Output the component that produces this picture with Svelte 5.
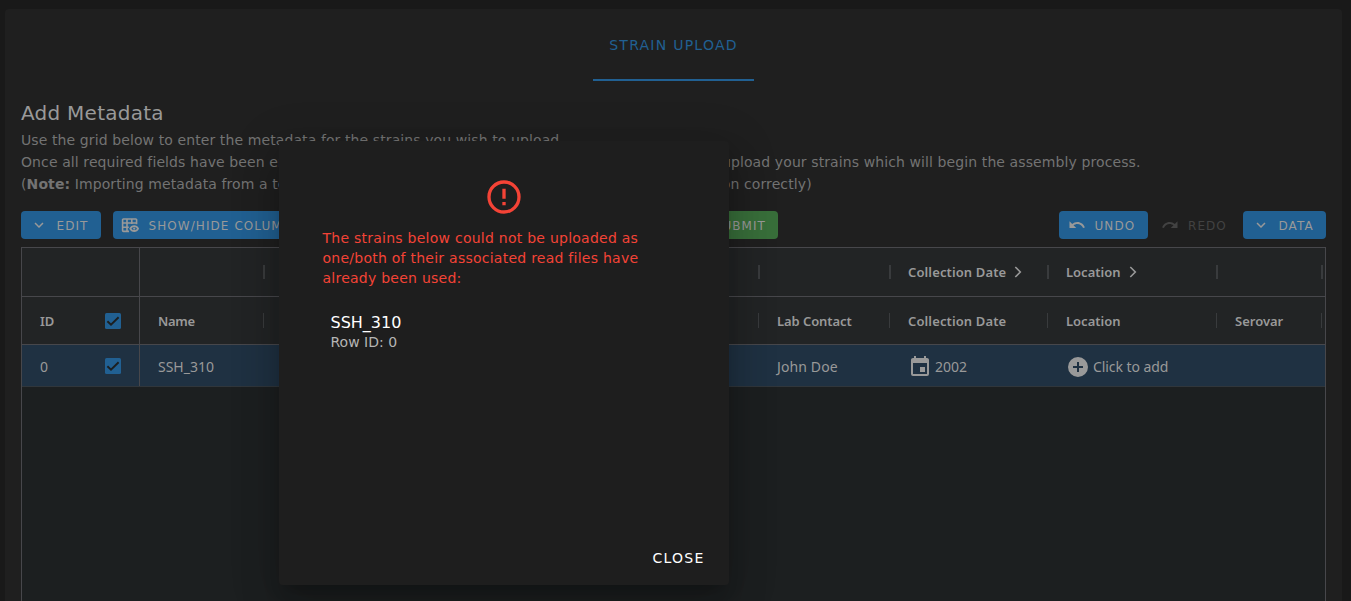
<script>
  const chevron = 'M7.41,8.58L12,13.17L16.59,8.58L18,10L12,16L6,10L7.41,8.58Z';
  const undo = 'M12.5,8C9.85,8 7.45,9 5.6,10.6L2,7V16H11L7.38,12.38C8.77,11.22 10.54,10.5 12.5,10.5C16.04,10.5 19.05,12.81 20.1,16L22.47,15.22C21.08,11.03 17.15,8 12.5,8Z';
  const redo = 'M18.4,10.6C16.55,9 14.15,8 11.5,8C6.85,8 2.92,11.03 1.54,15.22L3.9,16C4.95,12.81 7.95,10.5 11.5,10.5C13.45,10.5 15.23,11.22 16.62,12.38L13,16H22V7L18.4,10.6Z';
  const alert = 'M11,15H13V17H11V15M11,7H13V13H11V7M12,2C6.47,2 2,6.5 2,12A10,10 0 0,0 12,22A10,10 0 0,0 22,12A10,10 0 0,0 12,2M12,20A8,8 0 0,1 4,12A8,8 0 0,1 12,4A8,8 0 0,1 20,12A8,8 0 0,1 12,20Z';
  const plus = 'M17,13H13V17H11V13H7V11H11V7H13V11H17M12,2A10,10 0 0,0 2,12A10,10 0 0,0 12,22A10,10 0 0,0 22,12A10,10 0 0,0 12,2Z';
  const calendar = 'M19,19H5V8H19M16,1V3H8V1H6V3H5C3.89,3 3,3.89 3,5V19A2,2 0 0,0 5,21H19A2,2 0 0,0 21,19V5C21,3.89 20.1,3 19,3H18V1M17,12H12V17H17V12Z';
  const groups = ['', '', '', 'Collection Date', 'Location', ''];
  const columns = ['Name', '', 'Lab Contact', 'Collection Date', 'Location', 'Serovar'];
</script>

{#snippet icon(d, size)}
  <svg class="icon" width={size} height={size} viewBox="0 0 24 24"><path fill="currentColor" {d} /></svg>
{/snippet}

{#snippet checkbox()}
  <svg class="check" width="16" height="16" viewBox="0 0 16 16">
    <rect width="16" height="16" rx="1.5" fill="#216092" />
    <path d="M2.4 8.2 6 11.6 13.6 4.2" fill="none" stroke="#1c1f20" stroke-width="1.9" />
  </svg>
{/snippet}

<main class="page">
  <section class="card">
    <nav class="tabs"><div class="tab">STRAIN UPLOAD</div></nav>
    <h1>Add Metadata</h1>
    <div class="intro">
      <p>Use the grid below to enter the metadata for the strains you wish to upload.</p>
      <p><span class="lead first">Once all required fields have been entered</span><span>upload your strains which will begin the assembly process.</span></p>
      <p><span class="lead second">(<b>Note:</b> Importing metadata from a template</span><span>function correctly)</span></p>
    </div>

    <div class="toolbar">
      <button class="edit">{@render icon(chevron, 18)}<span>EDIT</span></button>
      <button class="show">
        <svg class="icon" width="18" height="18" viewBox="0 0 18 18" fill="none" stroke="currentColor" stroke-width="1.6">
          <path d="M8 15.4H2.4a.8.8 0 0 1-.8-.8V3.8a.8.8 0 0 1 .8-.8h12.4a.8.8 0 0 1 .8.8v4.4M1.6 7H15.6M1.6 11.2h6.2M6 3v12.4M10.8 3v5" />
          <path d="M9.3 12.6c1.6-3.2 6.2-3.2 7.8 0-1.6 3.2-6.2 3.2-7.8 0Z" stroke-width="1.8" />
          <circle cx="13.2" cy="12.6" r="1.1" fill="currentColor" stroke="none" />
        </svg>
        <span>SHOW/HIDE COLUMNS</span>
      </button>
      <button class="submit"><span>SUBMIT</span></button>
      <div class="grow"></div>
      <button class="undo">{@render icon(undo, 18)}<span>UNDO</span></button>
      <button class="redo">{@render icon(redo, 18)}<span>REDO</span></button>
      <button class="data">{@render icon(chevron, 18)}<span>DATA</span></button>
    </div>

    <div class="grid">
      <div class="row group">
        <div class="cell pinned"></div>
        {#each groups as g}
          <div class="cell sep"><span>{g}</span>{#if g}
            <svg class="expand" width="8" height="12" viewBox="0 0 8 12"><path d="M1.3 1 6.3 6 1.3 11" fill="none" stroke="currentColor" stroke-width="1.6" /></svg>
          {/if}</div>
        {/each}
      </div>
      <div class="row head">
        <div class="cell pinned"><span>ID</span>{@render checkbox()}</div>
        {#each columns as c}<div class="cell sep"><span>{c}</span></div>{/each}
      </div>
      <div class="row data-row">
        <div class="cell pinned"><span class="text">0</span>{@render checkbox()}</div>
        <div class="cell"><span class="text">SSH_310</span></div>
        <div class="cell"></div>
        <div class="cell"><span class="text john">John Doe</span></div>
        <div class="cell with-icon">{@render icon(calendar, 24)}<span class="text">2002</span></div>
        <div class="cell with-icon">{@render icon(plus, 24)}<span class="text add">Click to add</span></div>
        <div class="cell"></div>
      </div>
    </div>
  </section>

  <div class="dialog" role="alertdialog">
    <div class="alert">{@render icon(alert, 40)}</div>
    <p class="message">The strains below could not be uploaded as one/both of their associated read files have already been used:</p>
    <div class="item">
      <div class="name">SSH_310</div>
      <div class="sub">Row ID: 0</div>
    </div>
    <div class="actions"><button class="close">CLOSE</button></div>
  </div>
</main>

<style>
  :global(body) { background: #191919; overflow: hidden; }
  .page { position: relative; width: 1351px; height: 601px; overflow: hidden; box-sizing: border-box; padding: 9px 9px 0 5px; font-family: "DejaVu Sans", sans-serif; color: #999; }
  .card { height: 620px; background: #1f1f1f; border-radius: 4px; padding: 0 16px; box-sizing: border-box; }
  .tabs { display: flex; justify-content: center; height: 72px; }
  .tab { width: 161px; height: 72px; box-sizing: border-box; border-bottom: 2px solid #216092; color: #216092; font-size: 14px; letter-spacing: 1.25px; line-height: 72px; text-align: center; white-space: nowrap; }
  h1 { margin: 16px 0 0; font-size: 20px; line-height: 32px; font-weight: 400; letter-spacing: .25px; color: #999; }
  .intro { font-size: 14px; line-height: 22px; letter-spacing: .1px; color: #737373; height: 82px; }
  p { margin: 0; white-space: nowrap; }
  .lead { display: inline-block; overflow: hidden; vertical-align: top; }
  .first { width: 701px; }
  .second { width: 660.5px; }
  .toolbar { display: flex; height: 28px; }
  .grow { flex: 1; }
  button { display: flex; align-items: center; height: 28px; box-sizing: border-box; border: 0; border-radius: 4px; padding: 0 0 0 8px; background: #216092; color: #999; font: 12px "DejaVu Sans", sans-serif; letter-spacing: 1.07px; white-space: nowrap; }
  .icon { display: block; flex: none; }
  button span { margin-left: 9.5px; padding-top: 2px; }
  .edit { width: 80px; }
  .edit .icon { margin-left: .5px; }
  .edit span { margin-left: 9px; }
  .show { width: 190px; margin-left: 12px; }
  .submit { width: 110px; margin-left: 365px; background: #386e3a; justify-content: flex-end; padding: 0 12px 0 0; }
  .undo { width: 89px; padding-left: 8.5px; }
  .undo span { margin-left: 9px; }
  .redo { width: 87px; margin-right: 8px; background: none; color: #424242; padding-left: 13px; }
  .redo span { margin-left: 9px; }
  .data { width: 83px; padding-left: 8.5px; }
  .data span { margin-left: 9px; }
  .grid { margin-top: 8px; height: 380px; box-sizing: border-box; border: 1px solid #47474b; background: #1c1f20; font-family: "Noto Sans", sans-serif; }
  .row { display: grid; grid-template-columns: 118px 124px 495px 131px 158px 169px 105px 3px; background: #222425; border-bottom: 1px solid #47474b; box-sizing: border-box; }
  .cell { position: relative; display: flex; align-items: center; padding-left: 18px; white-space: nowrap; min-width: 0; }
  .pinned { border-right: 1px solid #47474b; justify-content: space-between; padding-right: 18px; }
  .group { height: 49px; }
  .head { height: 48px; }
  .group, .head { font-size: 13px; font-weight: 600; color: #999; }
  .sep:nth-child(5) span { letter-spacing: .12px; }
  .head .sep:nth-child(2) span { letter-spacing: -.3px; }
  .head .sep:nth-child(4) span { letter-spacing: -.07px; }
  .sep::after { content: ""; position: absolute; right: 0; top: 16px; width: 1px; height: 15px; background: #393b3d; }
  .group .sep::after { right: -1px; top: 17px; width: 2px; height: 14px; }
  .expand { margin-left: 8px; }
  .data-row { height: 42px; background: #1f3142; border-color: #30363b; font-size: 14px; }
  .text { padding-top: 2px; }
  .john { letter-spacing: .12px; }
  .with-icon .icon { margin-top: 3px; }
  .with-icon .text { margin-left: 3px; }
  .with-icon .add { letter-spacing: -.07px; }
  .dialog { position: absolute; left: 279px; top: 141px; width: 450px; height: 444px; box-sizing: border-box; display: flex; flex-direction: column; border-radius: 4px; background: #1e1e1e; box-shadow: 0 11px 15px -7px rgba(0,0,0,.2), 0 24px 38px 3px rgba(0,0,0,.14), 0 9px 46px 8px rgba(0,0,0,.12); padding: 36px 17px 13px 43.5px; }
  .alert { color: #f44336; display: flex; justify-content: center; padding-right: 27px; }
  .message { margin-top: 11px; width: 330px; white-space: normal; color: #f44336; font-size: 14px; line-height: 20px; letter-spacing: .25px; }
  .item { margin: 25px 0 0 8px; }
  .name { color: #fff; font-size: 16px; line-height: 19px; }
  .sub { color: #b5b5b5; font-size: 14px; line-height: 20px; }
  .actions { margin-top: auto; display: flex; justify-content: flex-end; }
  .close { background: none; color: #fff; font-size: 14px; letter-spacing: 1.25px; padding: 0 7.5px; }
</style>
